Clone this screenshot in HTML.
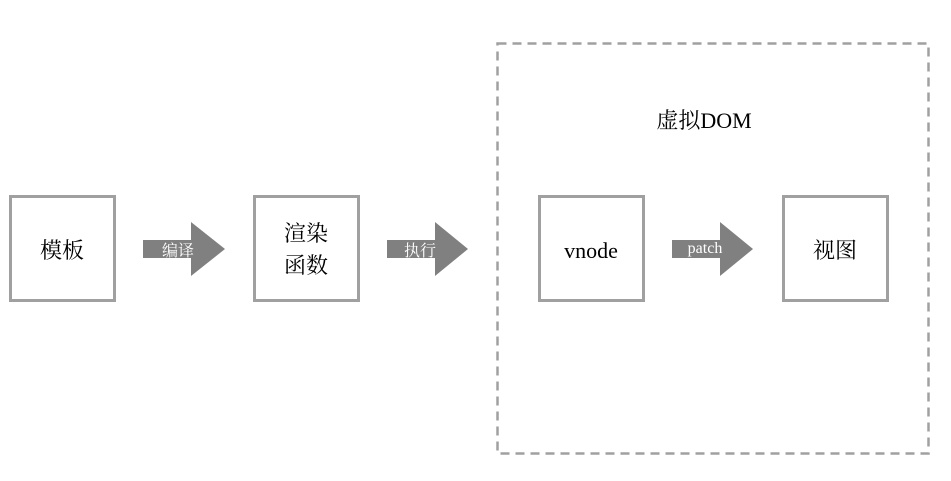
<!DOCTYPE html><html><head><meta charset="utf-8"><style>
body{margin:0;background:#fff;width:951px;height:476px;overflow:hidden}
svg text{font-family:"Liberation Serif","Noto Serif CJK SC",serif}
</style></head><body>
<svg width="951" height="476" viewBox="0 0 951 476">
<g fill="none" stroke="#a0a0a0" stroke-width="3">
<rect x="10.5" y="196.5" width="104" height="104"/>
<rect x="254.5" y="196.5" width="104" height="104"/>
<rect x="539.5" y="196.5" width="104" height="104"/>
<rect x="783.5" y="196.5" width="104" height="104"/>
<rect x="497.5" y="43.5" width="431" height="410" stroke-dasharray="9 6" stroke-width="2.5"/>
</g>
<g fill="#808080">
<polygon points="143,240 191,240 191,222 225,249 191,276 191,258 143,258"/>
<polygon points="387,240 435,240 435,222 468,249 435,276 435,258 387,258"/>
<polygon points="672,240 720,240 720,222 753,249 720,276 720,258 672,258"/>
</g>
<g fill="#fff" font-size="16" text-anchor="middle">
<text x="178" y="256">编译</text>
<text x="420" y="256">执行</text>
<text x="705" y="253">patch</text>
</g>
<g fill="#000" font-size="22" text-anchor="middle">
<text x="62" y="258">模板</text>
<text x="306" y="241">渲染</text>
<text x="306" y="273">函数</text>
<text x="591" y="258">vnode</text>
<text x="835" y="258">视图</text>
<text x="704" y="128">虚拟DOM</text>
</g>
</svg>
</body></html>
